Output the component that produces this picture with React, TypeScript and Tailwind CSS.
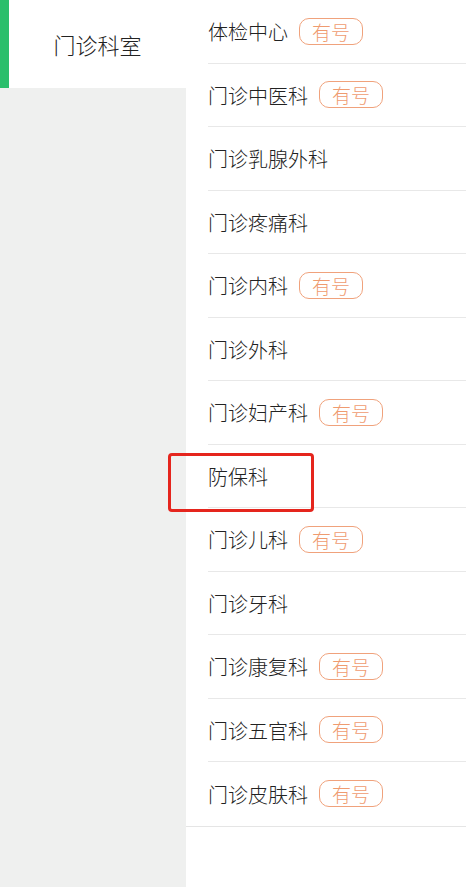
import React from 'react';

type Dept = { name: string; hasSlot: boolean };

const DEPTS: Dept[] = [
  { name: '体检中心', hasSlot: true },
  { name: '门诊中医科', hasSlot: true },
  { name: '门诊乳腺外科', hasSlot: false },
  { name: '门诊疼痛科', hasSlot: false },
  { name: '门诊内科', hasSlot: true },
  { name: '门诊外科', hasSlot: false },
  { name: '门诊妇产科', hasSlot: true },
  { name: '防保科', hasSlot: false },
  { name: '门诊儿科', hasSlot: true },
  { name: '门诊牙科', hasSlot: false },
  { name: '门诊康复科', hasSlot: true },
  { name: '门诊五官科', hasSlot: true },
  { name: '门诊皮肤科', hasSlot: true },
];

const App: React.FC = () => {
  return (
    <div
      className="flex w-[466px] h-[887px] bg-white overflow-hidden font-light"
      style={{ fontFamily: '"Noto Sans CJK SC", "Noto Sans", sans-serif' }}
    >
      {/* Left category menu */}
      <div className="w-[186px] shrink-0 bg-[#eff0ef]">
        <div className="flex h-[88px] bg-white">
          <div className="w-[9px] bg-[#2bbf6c]"></div>
          <div className="flex-1 flex items-center justify-center text-[22px] text-[#222]">门诊科室</div>
        </div>
      </div>

      {/* Department list */}
      <div className="flex-1">
        {DEPTS.map((d, i) => {
          const last = i === DEPTS.length - 1;
          return (
            <div key={d.name} className={last ? 'border-b border-[#e5e5e5]' : ''}>
              <div
                className={`relative flex items-center h-[63.5px] ml-[22px] ${last ? '' : 'border-b border-[#e8e8e8]'}`}
              >
                <span className="text-[20px] text-[#222] leading-none pt-[2px]">{d.name}</span>
                {d.hasSlot && (
                  <span className="ml-[11px] flex items-center justify-center w-[64px] h-[27px] border border-[#f0a27c] rounded-[10px] text-[19px] text-[#ef9b70] leading-none">
                    有号
                  </span>
                )}
                {d.name === '防保科' && (
                  <div className="absolute left-[-40px] top-[8px] w-[146px] h-[59px] border-[3px] border-[#e5251d] rounded-[4px]"></div>
                )}
              </div>
            </div>
          );
        })}
      </div>
    </div>
  );
};

export default App;
